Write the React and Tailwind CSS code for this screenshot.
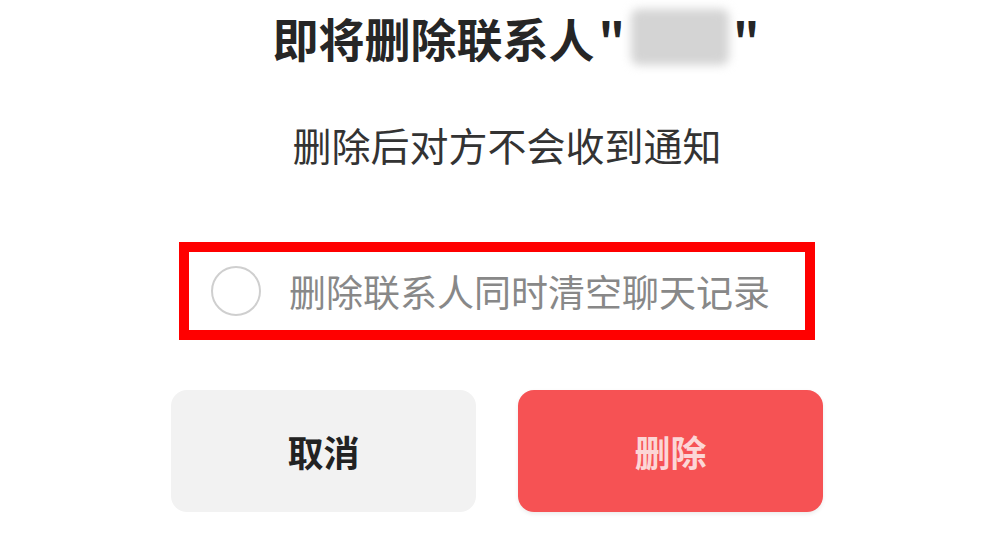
export default function App() {
  return (
    <div className="w-[994px] h-[551px] bg-white overflow-hidden font-['Noto_Sans_CJK_SC','Noto_Sans',sans-serif] flex flex-col items-center">
      {/* title */}
      <div className="mt-[12px] ml-[38px] flex items-center h-[50px]">
        <span className="text-[46px] leading-[50px] font-bold text-[#262626]">即将删除联系人</span>
        <span className="ml-[4px] text-[46px] leading-[50px] font-bold text-[#262626]">"</span>
        <div className="w-[98px] h-[56px] ml-[6px] mr-[4px] bg-[#d4d4d4] rounded-[8px] blur-[5px]" />
        <span className="text-[46px] leading-[50px] font-bold text-[#262626]">"</span>
      </div>

      {/* subtitle */}
      <p className="mt-[60px] ml-[20px] text-[39px] leading-[44px] text-[#333]">删除后对方不会收到通知</p>

      {/* highlighted checkbox row */}
      <div className="mt-[76px] w-[636px] h-[98px] border-[10px] border-[#ff0000] bg-white flex items-center pl-[22px]">
        <div className="w-[50px] h-[50px] rounded-full border-[2px] border-[#cfcfcf]" />
        <span className="ml-[28px] text-[37px] leading-[44px] text-[#888]">删除联系人同时清空聊天记录</span>
      </div>

      {/* buttons */}
      <div className="mt-[50px] flex gap-[42px]">
        <button className="w-[305px] h-[122px] rounded-[16px] bg-[#f2f2f2] text-[36px] font-bold text-[#222] flex items-center justify-center">
          取消
        </button>
        <button className="w-[305px] h-[122px] rounded-[16px] bg-[#f65254] text-[36px] font-bold text-[#fcd6d6] flex items-center justify-center shadow-[0_2px_4px_rgba(0,0,0,0.08)]">
          删除
        </button>
      </div>
    </div>
  );
}
